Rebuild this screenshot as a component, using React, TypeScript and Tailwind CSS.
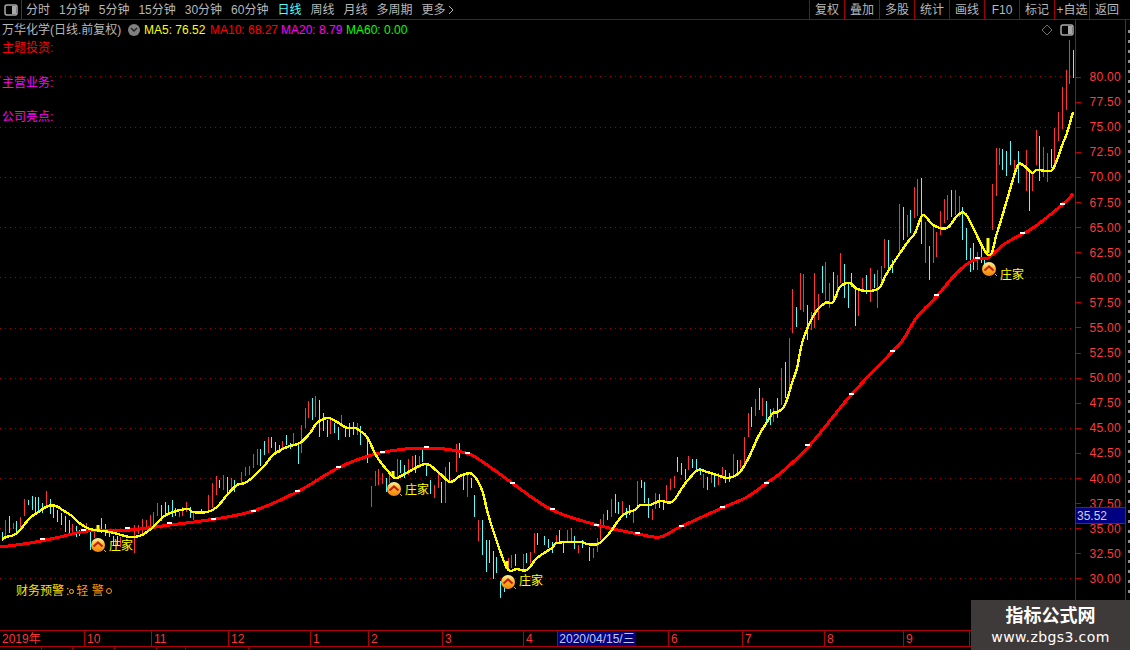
const FONT = "font-['Liberation_Sans','Noto_Sans_CJK_SC',sans-serif]";

// [x, top, bottom, colour] r = red, c = cyan
const bars: [number, number, number, "r" | "c"][] = [
  [2,532,540,"c"],[5,520,538,"r"],[9,516,533,"c"],[13,523,529,"r"],[16,521,533,"c"],[20,517,530,"r"],[24,499,516,"r"],[28,500,505,"c"],
  [32,496,510,"c"],[35,497,512,"c"],[38,497,511,"c"],[42,503,513,"c"],[46,491,505,"r"],[50,499,514,"c"],[53,507,518,"c"],[57,510,522,"c"],
  [61,513,525,"c"],[65,516,532,"c"],[69,520,533,"c"],[72,524,534,"r"],[76,526,537,"c"],[79,530,536,"c"],[86,523,533,"r"],[90,532,550,"c"],
  [94,530,538,"r"],[101,518,533,"c"],[105,524,536,"c"],[109,532,537,"c"],[113,536,545,"c"],[117,536,545,"c"],[120,537,547,"r"],[134,525,553,"r"],
  [138,525,534,"r"],[142,519,533,"r"],[146,520,530,"r"],[150,515,527,"r"],[153,512,525,"r"],[157,503,516,"r"],[161,505,521,"c"],[165,502,514,"c"],
  [168,505,513,"c"],[172,500,517,"c"],[175,508,516,"c"],[179,512,517,"r"],[182,507,516,"r"],[186,502,512,"r"],[190,507,518,"c"],[193,511,520,"r"],
  [201,509,514,"c"],[208,495,510,"r"],[212,483,508,"r"],[216,476,495,"r"],[219,480,488,"c"],[223,475,490,"r"],[227,477,493,"c"],[231,478,488,"r"],
  [234,480,492,"c"],[241,472,483,"r"],[245,467,476,"r"],[249,466,475,"r"],[253,454,468,"r"],[257,449,465,"r"],[260,449,466,"c"],[264,441,455,"c"],
  [268,437,453,"r"],[271,437,448,"c"],[275,442,453,"c"],[279,445,453,"c"],[282,441,449,"r"],[286,435,445,"c"],[290,443,449,"c"],[293,433,445,"r"],
  [298,443,464,"c"],[301,425,453,"r"],[305,408,428,"r"],[308,401,418,"r"],[312,398,420,"c"],[315,396,417,"r"],[319,400,437,"c"],[323,413,431,"c"],
  [327,420,437,"c"],[330,419,434,"r"],[334,423,433,"c"],[338,427,440,"c"],[341,415,427,"r"],[345,427,437,"c"],[349,423,437,"c"],[353,422,435,"c"],
  [357,423,435,"r"],[360,426,445,"c"],[367,440,463,"c"],[371,486,507,"r"],[375,471,486,"r"],[378,469,485,"r"],[382,473,484,"r"],[386,478,492,"c"],
  [389,472,483,"r"],[397,459,477,"r"],[400,460,473,"c"],[404,465,478,"c"],[408,459,475,"r"],[412,456,469,"r"],[415,455,473,"c"],[419,456,468,"r"],
  [422,449,462,"c"],[426,463,476,"c"],[430,480,494,"c"],[434,485,498,"r"],[438,473,488,"r"],[441,482,503,"c"],[445,467,503,"r"],[449,462,482,"c"],
  [456,444,472,"r"],[459,443,458,"c"],[463,475,490,"c"],[467,473,497,"r"],[471,478,488,"c"],[474,495,517,"c"],[478,520,541,"r"],[482,520,555,"c"],
  [486,540,572,"c"],[489,540,563,"c"],[493,551,579,"c"],[496,557,573,"c"],[500,581,598,"c"],[504,588,592,"c"],[508,558,568,"r"],[511,555,568,"r"],
  [515,554,566,"c"],[523,554,570,"r"],[526,553,563,"c"],[530,552,563,"r"],[534,533,553,"r"],[537,533,545,"c"],[544,536,545,"c"],[548,539,548,"c"],
  [552,542,553,"c"],[556,535,543,"r"],[559,530,543,"c"],[563,543,553,"c"],[567,530,543,"r"],[571,528,543,"r"],[574,536,549,"c"],[578,545,553,"r"],
  [582,540,548,"c"],[589,547,561,"c"],[593,548,558,"r"],[597,538,552,"r"],[600,519,540,"r"],[603,514,528,"r"],[607,510,520,"c"],[611,499,517,"r"],
  [615,494,513,"c"],[618,502,514,"c"],[622,501,515,"r"],[626,508,518,"c"],[629,505,515,"c"],[633,510,523,"r"],[637,481,507,"r"],[641,480,488,"c"],
  [644,482,503,"c"],[648,498,518,"c"],[652,509,520,"r"],[655,493,509,"r"],[659,494,508,"c"],[663,500,510,"c"],[666,485,502,"r"],[670,479,490,"r"],
  [674,476,488,"r"],[677,457,472,"c"],[681,463,475,"c"],[685,469,480,"c"],[688,456,470,"r"],[692,459,468,"c"],[696,459,471,"c"],[700,468,475,"c"],
  [703,474,488,"r"],[707,477,490,"c"],[711,474,483,"r"],[714,475,487,"c"],[718,473,485,"r"],[722,467,477,"r"],[725,470,483,"c"],[729,473,482,"c"],
  [733,454,475,"r"],[737,460,473,"c"],[740,460,468,"r"],[744,437,463,"r"],[748,413,437,"r"],[751,407,427,"c"],[755,399,416,"r"],[759,388,410,"c"],
  [762,398,416,"r"],[766,401,422,"c"],[770,409,425,"c"],[773,408,422,"r"],[777,398,418,"c"],[781,368,405,"r"],[785,362,398,"c"],[789,338,387,"r"],
  [792,289,333,"r"],[796,307,327,"c"],[800,273,310,"r"],[803,274,312,"r"],[807,305,340,"c"],[811,312,330,"r"],[814,273,328,"r"],[818,294,320,"r"],
  [822,266,293,"c"],[825,262,300,"r"],[829,283,308,"r"],[833,272,299,"c"],[837,275,297,"r"],[840,253,283,"r"],[844,264,298,"c"],[848,283,308,"c"],
  [851,273,287,"c"],[855,288,326,"c"],[858,288,316,"r"],[862,278,290,"r"],[866,275,294,"c"],[870,268,302,"r"],[874,274,288,"c"],[877,270,308,"r"],
  [881,266,287,"r"],[884,239,268,"r"],[888,240,268,"c"],[892,260,273,"c"],[899,204,255,"r"],[903,207,240,"c"],[907,215,237,"r"],[910,210,233,"c"],
  [914,187,218,"r"],[917,179,216,"r"],[921,178,244,"c"],[925,222,263,"r"],[929,246,280,"c"],[933,227,263,"r"],[936,232,257,"r"],[940,211,235,"r"],
  [944,199,223,"r"],[947,195,220,"r"],[951,190,217,"c"],[955,190,215,"r"],[959,196,217,"r"],[962,207,240,"c"],[966,228,260,"c"],[970,248,272,"c"],
  [973,243,270,"c"],[977,252,270,"r"],[981,246,263,"c"],[984,258,268,"c"],[992,184,230,"r"],[996,148,196,"r"],[999,148,165,"r"],[1002,149,170,"c"],
  [1006,151,176,"c"],[1010,141,165,"c"],[1014,160,173,"r"],[1018,151,183,"c"],[1026,150,191,"r"],[1029,173,211,"c"],[1032,172,191,"r"],[1036,130,165,"r"],
  [1039,136,181,"c"],[1043,147,177,"r"],[1047,153,182,"r"],[1051,149,168,"c"],[1054,128,167,"r"],[1058,112,141,"r"],[1062,87,129,"r"],[1066,70,110,"r"],
  [1069,40,84,"r"],[1073,50,78,"c"],
];

const yellow = "2,540 6,537 14,535 20,530 30,518 40,511 48,506 56,506 64,511 72,516 78,522 90,529 110,532 130,537 142,535 153,527 163,517 173,512 188,509 193,512 207,512 217,507 227,495 237,485 245,483 253,477 265,465 273,455 287,447 300,443 310,433 317,423 328,418 337,422 347,428 355,428 360,431 367,437 377,457 387,470 395,478 403,475 425,464 438,472 450,482 460,476 472,474 482,490 487,510 493,530 507,568 517,569 527,570 537,558 552,548 557,543 580,542 587,544 598,544 608,535 623,515 635,510 640,505 650,505 660,501 672,502 682,488 688,480 698,470 707,472 717,475 728,478 740,472 750,455 758,437 767,422 773,413 778,412 785,405 792,383 797,368 803,340 815,313 825,303 833,302 840,287 850,283 857,289 870,291 880,287 887,273 907,243 915,233 923,215 933,225 947,228 958,215 967,216 988,255 997,233 1007,200 1017,167 1023,165 1032,173 1037,170 1050,171 1055,165 1063,143 1067,133 1073,112";

const red = "0,547 30,543 60,537 88,531 130,530 170,525 215,519 253,511 297,492 340,467 380,453 425,448 466,453 490,467 512,483 552,510 597,525 638,534 660,537 680,527 722,508 747,497 767,483 783,471 810,445 851,395 892,352 903,340 917,317 937,296 953,277 967,264 977,259 988,258 1003,245 1022,234 1033,228 1062,205 1073,194";

// smooth a point list into a Catmull-Rom style path
function curve(points: string) {
  const p = points.split(" ").map((s) => s.split(",").map(Number));
  let d = `M${p[0][0]} ${p[0][1]}`;
  for (let i = 0; i < p.length - 1; i++) {
    const a = p[Math.max(i - 1, 0)];
    const b = p[i];
    const c = p[i + 1];
    const e = p[Math.min(i + 2, p.length - 1)];
    d += ` C${b[0] + (c[0] - a[0]) / 6} ${b[1] + (c[1] - a[1]) / 6} ${c[0] - (e[0] - b[0]) / 6} ${c[1] - (e[1] - b[1]) / 6} ${c[0]} ${c[1]}`;
  }
  return d;
}

const dashes: [number, number][] = [
  [42,540],[83,531],[127,529],[169,524],[213,520],[253,512],[297,492],[338,468],[382,453],[426,448],[467,454],[512,484],[552,510],[596,526],[637,534],
  [681,527],[722,508],[766,484],[807,446],[851,395],[892,352],[936,296],[977,259],[1022,234],[1062,205],
];

const gridLines = [76, 127, 177, 227, 277, 328, 378, 428, 478, 528, 578];
const arrows: [number, number, number][] = [[98,525,531],[393,471,477],[507,561,569],[988,238,253]];
const prices = ["80.00","77.50","75.00","72.50","70.00","67.50","65.00","62.50","60.00","57.50","55.00","52.50","50.00","47.50","45.00","42.50","40.00","37.50","35.00","32.50","30.00"];
const periods = ["分时","1分钟","5分钟","15分钟","30分钟","60分钟","日线","周线","月线","多周期"];
const tools = ["复权","叠加","多股","统计","画线","F10","标记","+自选","返回"];
const months: [string, number][] = [["2019年",85],["10",67],["11",77],["12",82],["1",58],["2",74],["3",81],["4",34]];
const monthsEnd: [string, number][] = [["6",74],["7",82],["8",79],["9",66]];
const strip = Array.from({ length: 58 }, (_, i) => i);

function ToggleIcon() {
  return (
    <svg width="14" height="12" viewBox="0 0 14 12">
      <rect x="1" y="1" width="12" height="10" rx="2" fill="none" stroke="#a8a8a8" strokeWidth="1.5" />
      <rect x="8" y="2" width="4" height="8" fill="#a8a8a8" />
    </svg>
  );
}

function Pin({ x, y, textY = 0 }: { x: number; y: number; textY?: number }) {
  return (
    <div className="absolute flex items-center" style={{ left: x - 7, top: y - 27 }}>
      <svg width="16" height="16" viewBox="0 0 16 16" className="block">
        <defs>
          <linearGradient id="pinFill" x1="0" y1="0" x2="0" y2="1">
            <stop offset="0" stopColor="#fff3a0" />
            <stop offset="0.5" stopColor="#ffb020" />
            <stop offset="1" stopColor="#f08010" />
          </linearGradient>
        </defs>
        <circle cx="7" cy="7" r="7" fill="url(#pinFill)" />
        <path d="M2.5 8.5 L7 4.5 L11.5 8.5" fill="none" stroke="#c02010" strokeWidth="2.2" />
        <path d="M13 12 L15 14" stroke="#d8b040" strokeWidth="1" />
      </svg>
      <span className="relative ml-[2px] text-[12px] leading-none text-[#ffff00]" style={{ top: textY }}>庄家</span>
    </div>
  );
}

export default function App() {
  return (
    <div className={`${FONT} relative flex h-[650px] w-[1130px] flex-col overflow-hidden bg-black text-[12px]`}>
      {/* toolbar */}
      <div className="flex h-[20px] items-center border-b border-[#a00000] text-[#b8b8b8]">
        <div className="flex h-full w-[22px] items-center justify-center border-r border-[#c00000]">
          <ToggleIcon />
        </div>
        <div className="ml-[4px] flex flex-1 items-center gap-[9px]">
          {periods.map((p) => (
            <span key={p} className={p === "日线" ? "text-[#54fcfc]" : ""}>{p}</span>
          ))}
          <span>更多</span>
          <svg width="6" height="10" viewBox="0 0 6 10" className="-ml-[7px]">
            <path d="M1 1 L5 5 L1 9" fill="none" stroke="#b8b8b8" />
          </svg>
        </div>
        <div className="mr-[6px] flex h-full">
          {tools.map((t) => (
            <span key={t} className="flex w-[35px] items-center justify-center border-l border-[#a00000] whitespace-nowrap">{t}</span>
          ))}
        </div>
      </div>

      {/* chart and price axis */}
      <div className="flex h-[610px]">
        <div className="relative w-[1075px]">
          <svg width="1075" height="610" viewBox="0 20 1075 610" className="absolute inset-0 block">
            {gridLines.map((y) => (
              <line key={y} x1="0" x2="1075" y1={y + 0.5} y2={y + 0.5} stroke="#a00000" strokeDasharray="1 4" shapeRendering="crispEdges" />
            ))}
            {bars.map(([x, t, b, c]) => (
              <line key={x} x1={x + 0.5} x2={x + 0.5} y1={t} y2={b} stroke={c === "r" ? "#ff3232" : "#54fcfc"} shapeRendering="crispEdges" />
            ))}
            <path d={curve(red)} fill="none" stroke="#ff0000" strokeWidth="3" shapeRendering="crispEdges" />
            {dashes.map(([x, y]) => (
              <rect key={x} x={x - 2} y={y - 2} width="5" height="2" fill="#ffffff" />
            ))}
            <path d={curve(yellow)} fill="none" stroke="#ffff00" strokeWidth="2.4" shapeRendering="crispEdges" />
            {arrows.map(([x, t, b]) => (
              <line key={x} x1={x} x2={x} y1={t} y2={b} stroke="#ffff00" strokeWidth="3" />
            ))}
            <path d="M1047 25 L1052 30 L1047 35 L1042 30 Z" fill="none" stroke="#707070" />
          </svg>

          <div className="absolute left-[1060px] top-[4px]"><ToggleIcon /></div>

          {/* legend over the chart */}
          <div className="absolute left-[2px] top-[1px] flex h-[17px] items-center whitespace-nowrap">
            <span className="w-[126px] text-[#b8b8b8]">万华化学(日线.前复权)</span>
            <span className="flex h-[12px] w-[12px] items-center justify-center rounded-full bg-[#808080]">
              <svg width="8" height="6" viewBox="0 0 8 6"><path d="M1 1 L4 4 L7 1" fill="none" stroke="#202020" strokeWidth="1.4" /></svg>
            </span>
            <span className="ml-[4px] w-[66px] text-[#ffff00]">MA5: 76.52</span>
            <span className="w-[71px] text-[#ff0000]">MA10: 68.27</span>
            <span className="w-[65px] text-[#ff00ff]">MA20: 8.79</span>
            <span className="text-[#00ff00]">MA60: 0.00</span>
          </div>
          <div className="absolute left-[2px] top-[22px] flex flex-col gap-[22.5px] leading-[12px]">
            <span className="text-[#ff0000]">主题投资:</span>
            <span className="text-[#ff00ff]">主营业务:</span>
            <span className="text-[#ff00ff]">公司亮点:</span>
          </div>

          <Pin x={98} y={545} />
          <Pin x={394} y={489} />
          <Pin x={508} y={582} textY={-2} />
          <Pin x={989} y={269} textY={5} />

          <div className="absolute left-[16px] top-[565px] flex items-center text-[12px] leading-none whitespace-nowrap">
            <span className="text-[#ffe000]">财务预警</span>
            <span className="ml-[2px] text-[#ffc800]">:</span>
            <span className="mr-[2px] h-[5px] w-[5px] rounded-full border border-[#ffc800]" />
            <span className="text-[#ff9a00]">轻 警</span>
            <span className="ml-[2px] h-[6px] w-[6px] rounded-full border border-[#ff9a00]" />
          </div>
        </div>

        {/* price axis */}
        <div className="relative w-[51px] border-x border-[#c00000] pt-[44.5px]">
          {prices.map((p) => (
            <div key={p} className="flex h-[25.1px] items-center justify-between text-[#ff3a3a]">
              <span className="h-px w-[5px] bg-[#c00000]" />
              <span className="mr-[4px] text-[12px] tracking-[0.3px]">{p}</span>
            </div>
          ))}
          <div className="absolute left-0 top-[487px] flex h-[17px] w-[49px] items-center border-y border-[#c00000] bg-[#000080] pl-[1px] text-[#d0d0e8]">35.52</div>
        </div>

        {/* faint scale strip */}
        <div className="flex flex-1 flex-col items-end gap-[7px] pt-[10px]">
          {strip.map((i) => (
            <span key={i} className="h-[3px] w-[2px] shrink-0 bg-[#909090]" />
          ))}
        </div>
      </div>

      {/* date bar */}
      <div className="flex h-[17px] items-center border-y border-[#b00000] text-[#ff3232]">
        {months.map(([m, w]) => (
          <span key={m} className="flex h-full shrink-0 items-center border-r border-[#b00000] pl-[2px]" style={{ width: w }}>{m}</span>
        ))}
        <span className="flex h-full w-[78px] shrink-0 items-center justify-center bg-[#000080] text-[#c8c8f0]">2020/04/15/三</span>
        <span className="h-full w-[33px] shrink-0 border-r border-[#b00000]" />
        {monthsEnd.map(([m, w]) => (
          <span key={m} className="flex h-full shrink-0 items-center border-r border-[#b00000] pl-[2px]" style={{ width: w }}>{m}</span>
        ))}
      </div>

      {/* cut-off status row */}
      <div className="flex h-[3px] overflow-hidden">
        {[42, 31, 42, 42, 29, 63].map((w, i) => (
          <span key={i} className="h-full border-r border-[#a00000]" style={{ width: w }} />
        ))}
      </div>

      {/* watermark */}
      <div className="absolute bottom-0 right-0 flex h-[50px] w-[159px] flex-col items-center justify-center bg-[#3f3a3a] text-white">
        <span className="text-[18px] font-bold leading-[24px]">指标公式网</span>
        <span className="font-['DejaVu_Sans',sans-serif] text-[14px] leading-[18px] tracking-[0.4px]">www.zbgs3.com</span>
      </div>
    </div>
  );
}
